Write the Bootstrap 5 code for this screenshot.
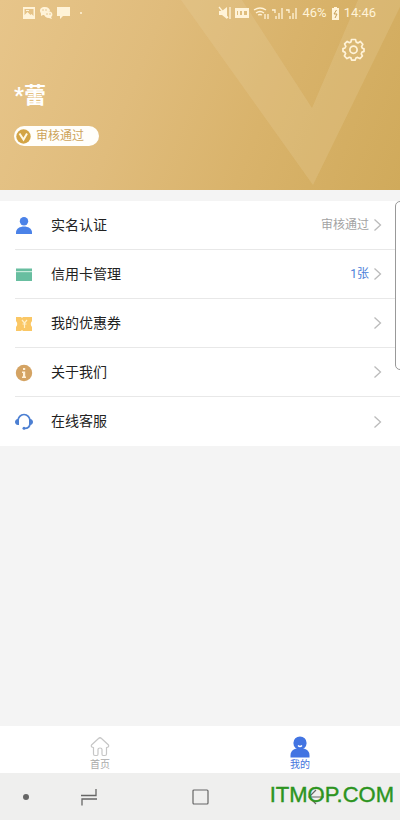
<!DOCTYPE html>
<html lang="zh-CN">
<head>
<meta charset="utf-8">
<meta name="viewport" content="width=device-width, initial-scale=1">
<title>我的</title>
<link href="https://cdn.jsdelivr.net/npm/bootstrap@5.3.0/dist/css/bootstrap.min.css" rel="stylesheet">
<style>
body{font-family:Roboto,"Noto Sans CJK SC",sans-serif;background:#f4f4f4;color:#222}
svg{display:block;flex:none}
.hero{height:190px;background:linear-gradient(112deg,#e7c58a 0%,#e0bc7c 35%,#d9b36b 65%,#d0aa5b 100%);color:#fffaf0}
.hero-mark{position:absolute;inset:0;width:100%;height:100%}
.status-bar{height:26px;padding:0 24px 0 22px;font-size:13px;line-height:26px;color:#fff3d8}
.settings{margin:12px 35px 0 0}
.user-name{font-size:22px;line-height:28px;font-weight:700;margin:21px 0 0 14px;color:#fff}
.verified{height:20px;width:85px;margin:16px 0 0 14px;padding:0 2px;gap:5px;background:#fffefa;color:#cda35a;font-size:12px;line-height:20px}
.menu-list{margin-top:11px}
.menu-row{height:49px;padding-left:15px;color:#222;text-decoration:none;background:#fff}
.menu-body{height:49px;padding:0 18px 0 36px;font-size:14px}
.menu-icon{width:18px;margin-right:-18px}
.menu-row:not(:last-child) .menu-line{border-bottom:1px solid #e8e8e8}
.menu-note{font-size:12px;color:#a3a3a3;margin-right:4px}
.menu-note.count{color:#4a80d9}
.edge-panel{position:absolute;top:201px;right:-8px;width:13px;height:169px;border:1px solid #999;border-radius:5px;background:#fff}
.tab-bar{height:47px;background:#fff}
.tab-link{color:#aaa;font-size:10px;line-height:12px;text-decoration:none;padding-top:10px}
.tab-link span{padding-top:1px}
.tab-link.current{color:#4474dd}
.system-bar{height:47px;padding:0 75px 0 16px;background:#efefee}
.system-bar button{height:47px}
.recents{margin-left:44px}
.watermark{position:absolute;right:6px;bottom:11px;font:22px/28px "Liberation Sans",Arial,sans-serif;color:#2c9420;-webkit-text-stroke:.4px #2c9420}
</style>
<script src="https://cdn.jsdelivr.net/npm/bootstrap@5.3.0/dist/js/bootstrap.bundle.min.js"></script>
</head>
<body>
<div class="d-flex flex-column min-vh-100 position-relative overflow-hidden">
<header class="hero position-relative">
  <svg class="hero-mark" viewBox="0 0 400 190" preserveAspectRatio="none" aria-hidden="true">
    <path d="M181 0H242L312 108L358 0H400V7L313 185Z" fill="#e7cf9d" opacity=".26"/>
  </svg>
  <div class="position-relative">
    <div class="status-bar d-flex align-items-center justify-content-between">
      <div class="d-flex align-items-center">
        <svg width="62" height="14" viewBox="0 0 62 14" fill="#fff3d8"><path fill-rule="evenodd" d="M1 1h12v12H1zM2.500 3v6l3-3 3 3 1-1 2 2V3z"/><path d="M4 4h3v1H4z"/><path d="M23 1c-4 0-5 2-5 4 0 1 1 2 1 3v2l2-1h2c0-3 2-4 5-4 0-2-2-4-5-4z"/><path d="M26 5c-3 0-4 2-4 3 0 2 2 4 5 4l3 1-1-2c3-2 1-6-3-6z"/><path d="M35 1h13v9h-7l-3 3v-3h-3z"/><circle cx="59" cy="7" r="1"/><g fill="#dcb877"><circle cx="21" cy="4" r=".7"/><circle cx="24" cy="4" r=".7"/><circle cx="25" cy="8" r=".7"/><circle cx="28" cy="8" r=".7"/></g></svg>
      </div>
      <div class="d-flex align-items-center">
        <svg class="me-1" width="80" height="14" viewBox="0 0 80 14" fill="#fff3d8"><path d="M1 5h3l5-4v12L4 9H1z"/><path d="M1 1l9 11M12 1v12" stroke="#fff3d8" stroke-width="1.300"/><path fill-rule="evenodd" d="M17 2h14v10H17zM19 5v4h1V5zM22 5v4h2V5zM26 5v4h3V5z"/><g fill="none" stroke="#fff3d8" stroke-width="1.300"><path d="M36 4q6-4 12 0M38 7q4-3 8 0M40 9q2-1 4 0"/><path d="M47 8v5M50 8v5M54 4h3v3M58 10v3M61 7v6M64 2v11M68 4h3v3M72 10v3M75 7v6M78 2v11"/></g></svg>
        <span>46%</span>
        <svg class="mx-1" width="9" height="13" viewBox="0 0 9 13"><path d="M3 0h3v1h2v12H1V1h2z" fill="#fff3d8"/><path d="M5.500 3L3 7h3L4 11" fill="none" stroke="#c59d55"/></svg>
        <span>14:46</span>
      </div>
    </div>
    <div class="d-flex justify-content-end">
      <button class="settings btn p-0 border-0" type="button" aria-label="设置">
        <svg width="23" height="23" viewBox="0 0 23 23" fill="none" stroke="#fff3d8" stroke-width="1.700" stroke-linejoin="round"><path d="M9.500 1.500h4l.7 2.600 1.800.8 2.400-1.400 2.400 2.800-1.200 2.400.7 1.500 1.700.6v2.600l-2 .7-.7 1.700 1.100 2.200-2.500 2.600-2.400-1.200-1.600.6-.8 2.200h-3.400l-.8-2.300-1.500-.6-2.400 1.300L2.400 18l1.200-2.300-.7-1.600-1.900-.7v-2.800l2-.6.8-1.700-1.200-2.400 2.600-2.500 2.300 1.300 1.400-.7z"/><circle cx="11.500" cy="11.700" r="3.600"/></svg>
      </button>
    </div>
    <h1 class="user-name">*蕾</h1>
    <div class="verified d-flex align-items-center rounded-pill text-nowrap">
      <svg width="15" height="15" viewBox="0 0 15 15"><circle cx="7.500" cy="7.500" r="7.200" fill="#d3a445"/><path d="M3.500 4.500l4 6 3.500-6" fill="none" stroke="#fff8e4" stroke-width="2"/></svg>
      <span>审核通过</span>
    </div>
  </div>
</header>

<nav class="menu-list" aria-label="账户">
  <a class="menu-row d-flex align-items-center" href="#">
    <svg class="menu-icon" width="18" height="18" viewBox="0 0 18 18" fill="#4b82e8"><circle cx="9" cy="4.200" r="4.200"/><path d="M1 17v-1.500c0-4 4-6 8-6s8 2 8 6V17z"/></svg>
    <span class="menu-line menu-body flex-grow-1 d-flex align-items-center"><span class="me-auto">实名认证</span><span class="menu-note">审核通过</span><svg width="9" height="14" viewBox="0 0 9 14" fill="none" stroke="#bbb" stroke-width="1.300"><path d="M1.500 1.500L7.500 7l-6 5.500"/></svg></span>
  </a>
  <a class="menu-row d-flex align-items-center" href="#">
    <svg class="menu-icon" width="18" height="18" viewBox="0 0 18 18"><path d="M1 2.500h16V5H1zM1 6h16v9H1z" fill="#68bea0"/><path d="M1 5h16v1.200H1z" fill="#c7eadb"/></svg>
    <span class="menu-line menu-body flex-grow-1 d-flex align-items-center"><span class="me-auto">信用卡管理</span><span class="menu-note count">1张</span><svg width="9" height="14" viewBox="0 0 9 14" fill="none" stroke="#bbb" stroke-width="1.300"><path d="M1.500 1.500L7.500 7l-6 5.500"/></svg></span>
  </a>
  <a class="menu-row d-flex align-items-center" href="#">
    <svg class="menu-icon" width="18" height="18" viewBox="0 0 18 18"><path d="M1 2h5l1 1 1-1h9v4q-2.500 3 0 6v4H8l-1-1-1 1H1v-4q2.500-3 0-6z" fill="#fac765"/><path d="M7 5l2.500 3L12 5M9.500 8v5M7.500 9h4" fill="none" stroke="#fff0c9" stroke-width="1.200"/></svg>
    <span class="menu-line menu-body flex-grow-1 d-flex align-items-center"><span class="me-auto">我的优惠券</span><svg width="9" height="14" viewBox="0 0 9 14" fill="none" stroke="#bbb" stroke-width="1.300"><path d="M1.500 1.500L7.500 7l-6 5.500"/></svg></span>
  </a>
  <a class="menu-row d-flex align-items-center" href="#">
    <svg class="menu-icon" width="18" height="18" viewBox="0 0 18 18"><circle cx="9" cy="9" r="8.200" fill="#d4a363"/><path d="M8 4h2.200v2H8zM7 7.500h3.200v5H11V14H7v-1.500h1V9H7z" fill="#fff0d8"/></svg>
    <span class="menu-line menu-body flex-grow-1 d-flex align-items-center"><span class="me-auto">关于我们</span><svg width="9" height="14" viewBox="0 0 9 14" fill="none" stroke="#bbb" stroke-width="1.300"><path d="M1.500 1.500L7.500 7l-6 5.500"/></svg></span>
  </a>
  <a class="menu-row d-flex align-items-center" href="#">
    <svg class="menu-icon" width="18" height="18" viewBox="0 0 18 18"><path d="M3 8a6 6.500 0 0 1 12 0v2c0 3.500-2 5.500-5.500 5.500" fill="none" stroke="#4c7fd2" stroke-width="1.700"/><path d="M4 6v6H3C1 12 0 10.500 0 9s1-3 3-3zM14 6v6h1c2 0 3-1.500 3-3s-1-3-3-3z" fill="#4c7fd2"/><circle cx="9" cy="15.300" r="1.500" fill="#4c7fd2"/></svg>
    <span class="menu-line menu-body flex-grow-1 d-flex align-items-center"><span class="me-auto">在线客服</span><svg width="9" height="14" viewBox="0 0 9 14" fill="none" stroke="#bbb" stroke-width="1.300"><path d="M1.500 1.500L7.500 7l-6 5.500"/></svg></span>
  </a>
</nav>
<div class="edge-panel" aria-hidden="true"></div>

<footer class="mt-auto">
  <nav class="tab-bar d-flex" aria-label="主导航">
    <a class="tab-link flex-fill w-50 d-flex flex-column align-items-center" href="#">
      <svg width="20" height="22" viewBox="0 0 20 22" fill="none" stroke="#c6c6c6" stroke-width="1.200" stroke-linejoin="round"><path d="M8.500 2.500Q10 1 11.500 2.500L18.500 9q1 2-2 2.500V18q0 1.500-1.500 1.500h-2q-1 0-1-1.500v-4.500q0-1.500-2-1.500t-2 1.500V18q0 1.500-1 1.500H5q-1.500 0-1.500-1.500v-6.500Q.5 11 1.500 9z"/></svg>
      <span>首页</span>
    </a>
    <a class="tab-link current flex-fill w-50 d-flex flex-column align-items-center" href="#" aria-current="page">
      <svg width="20" height="22" viewBox="0 0 20 22"><circle cx="10" cy="7" r="6.600" fill="#4274e2"/><path d="M.5 21.500v-2C.5 14 5 12 10 12s9.500 2 9.500 7.500v2z" fill="#4274e2"/><path d="M8 9.500q2 2 4 0" fill="none" stroke="#fff" stroke-width="1.300"/></svg>
      <span>我的</span>
    </a>
  </nav>
  <div class="system-bar d-flex position-relative">
    <button class="btn p-0 border-0" type="button" aria-label="固定导航栏"><svg width="20" height="20" viewBox="0 0 20 20"><circle cx="10" cy="10" r="3" fill="#666"/></svg></button>
    <button class="recents btn p-0 border-0 me-auto" type="button" aria-label="最近任务"><svg width="18" height="20" viewBox="0 0 18 20" fill="none" stroke="#666" stroke-width="1.300"><path d="M16 2v6.500H1M17 12H2v6.500"/></svg></button>
    <button class="btn p-0 border-0 position-absolute start-50 translate-middle-x" type="button" aria-label="主屏幕"><svg width="18" height="18" viewBox="0 0 18 18" fill="none" stroke="#666" stroke-width="1.200"><rect x="2" y="2" width="15" height="14" rx="1"/></svg></button>
    <button class="btn p-0 border-0" type="button" aria-label="返回"><svg width="18" height="18" viewBox="0 0 18 18" fill="none" stroke="#666" stroke-width="1.200"><path d="M17 9H2M9 2L2 9l7 7"/></svg></button>
    <span class="watermark">ITMOP.COM</span>
  </div>
</footer>
</div>
</body>
</html>
